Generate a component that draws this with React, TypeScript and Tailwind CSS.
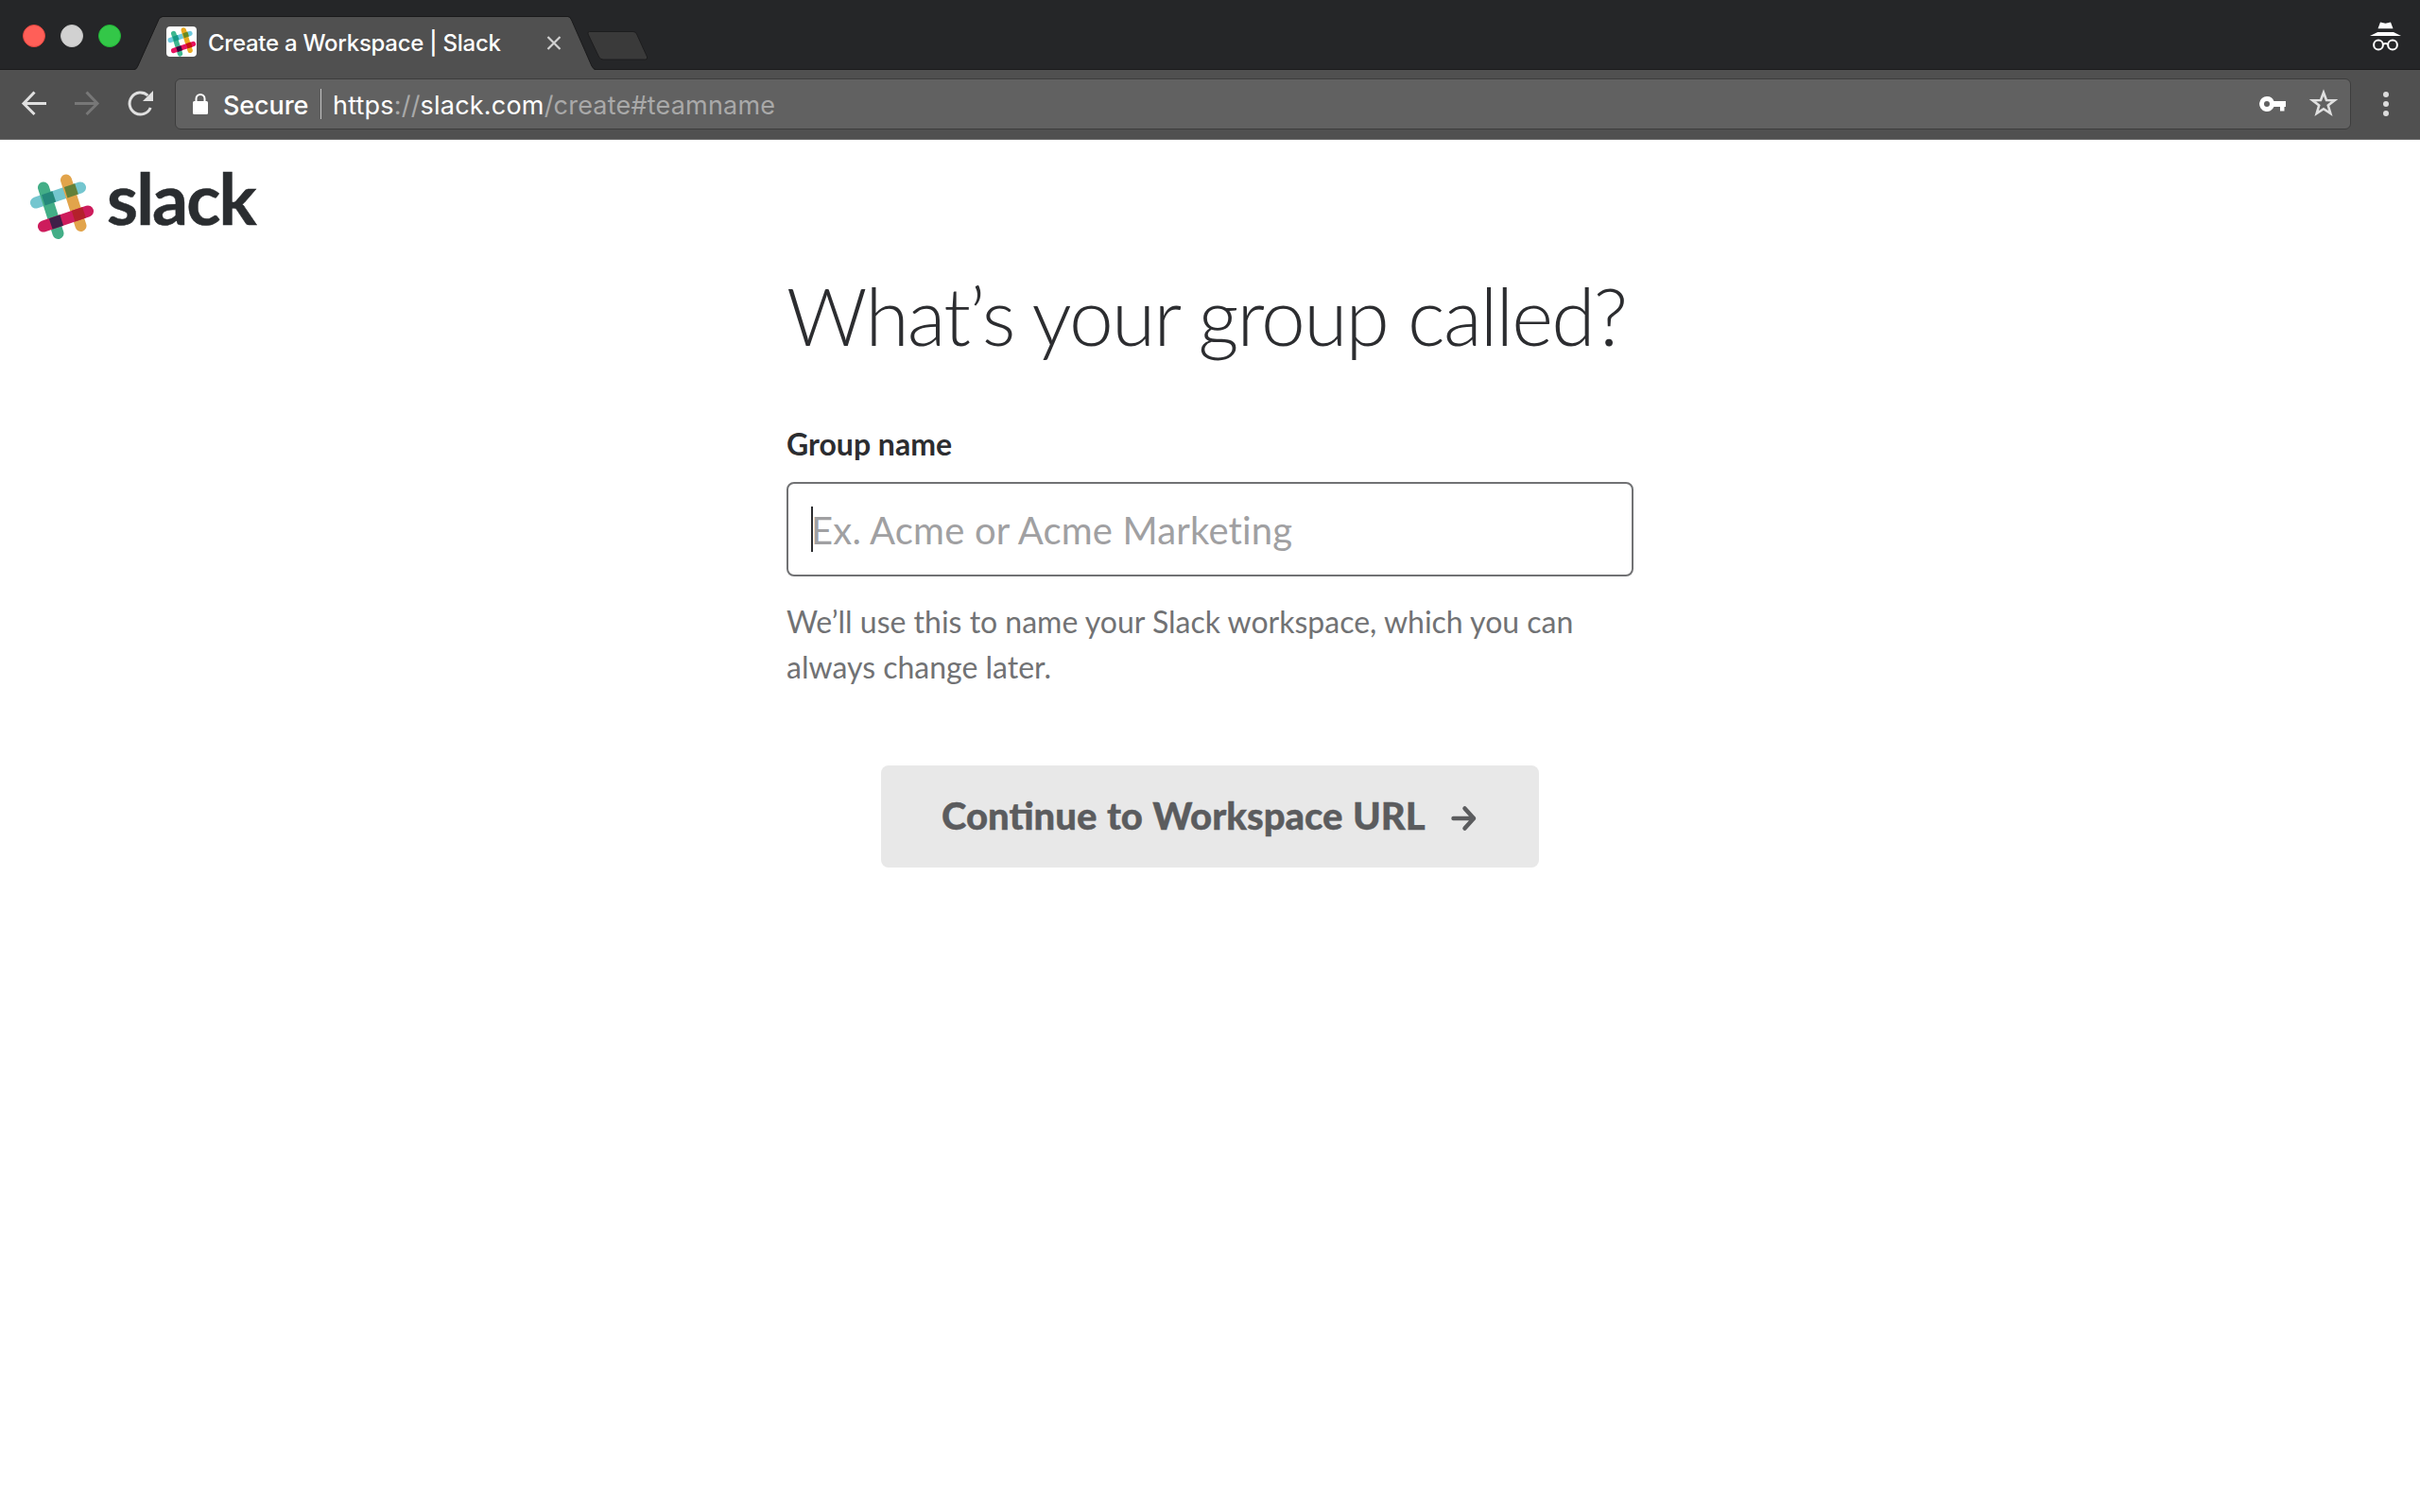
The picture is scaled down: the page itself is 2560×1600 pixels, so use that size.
import React from "react";

const ui = "font-['Inter',sans-serif]";

function SlackHash({ className, muted }: { className: string; muted?: boolean }) {
  const c = muted
    ? { blue: "#74c6cf", green: "#43ae87", gold: "#e2a44b", red: "#cd1c5c", bg: "#25887b", gg: "#63803a", gr: "#3f1f48", rr: "#b4212b" }
    : { blue: "#6fcbdf", green: "#3eb891", gold: "#ecaa1f", red: "#e6125f", bg: "#169a85", gg: "#6a8a1f", gr: "#34083a", rr: "#c8120f" };
  return (
    <svg className={className} viewBox="0 0 68 70">
      <g fill="none" strokeWidth="12" strokeLinecap="round">
        <path stroke={c.blue} d="M6 30.5 L53 14.5" />
        <path stroke={c.gold} d="M38 6.5 L53.5 55" />
        <path stroke={c.green} d="M14 14.5 L29.5 63" />
        <path stroke={c.red} d="M14 55.5 L61 39.5" />
      </g>
      <g>
        <path fill={c.bg} d="M12 22.2 L23.4 18.3 L27.2 29.6 L15.6 33.6 Z" />
        <path fill={c.gg} d="M35.8 14 L47.2 10.2 L50.8 21.6 L39.4 25.4 Z" />
        <path fill={c.gr} d="M19.8 47.2 L31.4 43.2 L35 54.8 L23.6 58.6 Z" />
        <path fill={c.rr} d="M43.8 39 L55.2 35.2 L58.8 46.6 L47.4 50.4 Z" />
      </g>
    </svg>
  );
}

function TabStrip() {
  return (
    <div className="flex h-[74px] items-start bg-[#252628] shadow-[inset_0_-1px_0_#1b1b1c]">
      <div className="flex gap-4 pl-6 pt-[26px]">
        <span className="size-6 rounded-full border border-[#e2463f] bg-[#ff5f58]" />
        <span className="size-6 rounded-full border border-[#c3c3c3] bg-[#d1d1d1]" />
        <span className="size-6 rounded-full border border-[#22b637] bg-[#33c748]" />
      </div>
      <div className="relative ml-[14px] mt-[16px] h-[58px] w-[488px]">
        <svg className="absolute inset-0 h-[58px] w-[488px]" viewBox="0 0 488 58">
          <path d="M0 58 Q2 58 3.500 55 L26 4.500 Q27.500 2 30 2 H459 Q461 2 462.500 5 L484 54 Q486 58 488 58 Z" fill="#505050" />
          <path d="M0 57.500 Q2 57.500 3.500 54.500 L26 4.500 Q27.500 1.500 30 1.500 H459 Q461 1.500 462.500 5 L484 54 Q486 57.500 488 57.500" fill="none" stroke="#1a1a1b" />
        </svg>
        <div className="relative flex h-[58px] items-center pl-[34px]">
          <div className="-mt-[2px] flex size-8 items-center justify-center rounded bg-white">
            <SlackHash className="h-[31px] w-[31px]" />
          </div>
          <span className={`${ui} mt-px ml-3 w-[320px] whitespace-nowrap text-[24px] font-medium tracking-[-0.26px] text-white`}>
            Create a Workspace | Slack
          </span>
          <svg className="ml-[38px] mt-[2px] size-4" viewBox="0 0 16 16" stroke="#d2d2d2" strokeWidth="2.200">
            <path d="M1.500 1 L14.500 14 M14.500 1 L1.500 14" />
          </svg>
        </div>
      </div>
      <svg className="-ml-[12px] mt-[32px] h-[34px] w-[70px]" viewBox="0 0 70 34">
        <path d="M5.500 1.500 H52 Q54.500 1.500 55.500 4 L66.500 28 Q67.500 31 64.500 31 H20 Q17 31 15.500 28 L4 4 Q3.500 1.500 5.500 1.500 Z" fill="#3a3a3a" stroke="#1d1d1e" />
      </svg>
      <svg className="ml-auto mr-5 mt-[23px] h-[31px] w-[33px]" viewBox="0 0 33 31" fill="#fff">
        <path d="M11 0.500 L16.500 1.800 L22 0.500 L24.500 7.300 H8.500 Z M8.200 11 H25 L33 15 H0 Z" />
        <g fill="none" stroke="#fff" strokeWidth="2">
          <circle cx="9" cy="24.500" r="4.900" />
          <circle cx="24" cy="24.500" r="4.900" />
          <path d="M14 24 Q16.500 22 19 24" />
        </g>
      </svg>
    </div>
  );
}

function Toolbar() {
  return (
    <div className="flex h-[74px] items-start border-b border-[#6b6b6b] bg-[#505050] pt-[9px]">
      <svg className="ml-[22px] mt-[12px] size-7" viewBox="0 0 28 28" fill="none" stroke="#e0e0e0" strokeWidth="3">
        <path d="M27 14.500 H3 M14.500 2.500 L3 14.500 L14.500 26" />
      </svg>
      <svg className="ml-7 mt-[12px] size-7" viewBox="0 0 28 28" fill="none" stroke="#777" strokeWidth="3">
        <path d="M1 14.500 H25 M13.500 2.500 L25 14.500 L13.500 26" />
      </svg>
      <svg className="ml-7 mt-[12px] size-[30px]" viewBox="0 0 30 30" fill="none" stroke="#e0e0e0" strokeWidth="3">
        <path d="M22.300 6 A11.500 11.500 0 1 0 25.200 19" />
        <path d="M28 1 V12 H17 Z" fill="#e0e0e0" stroke="none" />
      </svg>
      <div className={`${ui} ml-[21px] flex h-[54px] w-[2302px] items-center rounded-md border border-[#3d3d3d] bg-[#616161] text-[27px] text-white`}>
        <svg className="ml-[18px] h-[22px] w-4" viewBox="0 0 16 22">
          <rect y="8" width="16" height="14" rx="1.500" fill="#fff" />
          <path d="M3.500 9 V5.500 A4.500 4.500 0 0 1 12.500 5.500 V9" fill="none" stroke="#fff" strokeWidth="2" />
        </svg>
        <span className="ml-4 mt-1 w-[103px] whitespace-nowrap font-medium tracking-[-0.1px]">Secure</span>
        <span className="h-8 w-px bg-[#c4c4c4]" />
        <span className="ml-3 mt-1 whitespace-nowrap tracking-[0.2px]">
          https<span className="text-[#a9a9a9]">://</span>slack.com<span className="text-[#a9a9a9]">/create#teamname</span>
        </span>
        <svg className="-mt-px ml-auto h-4 w-7" viewBox="0 0 28 16" fill="#fff">
          <path fillRule="evenodd" d="M8 0 A8 8 0 1 0 15.500 11 H22 V15.500 H26.500 V11 H28 V5 H15.500 A8 8 0 0 0 8 0 Z M8 5 A3 3 0 1 1 8 11 A3 3 0 1 1 8 5 Z" />
        </svg>
        <svg className="-mt-[2px] ml-[25px] mr-[13px] size-[30px]" viewBox="0 0 30 30" fill="none" stroke="#e0e0e0" strokeWidth="2.600">
          <path d="M15 4 L18 12 L26.500 12.300 L19.800 17.500 L22.300 26 L15 21.200 L7.700 26 L10.200 17.500 L3.500 12.300 L12 12 Z" />
        </svg>
      </div>
      <div className="ml-[34px] mt-[14px] flex flex-col gap-1">
        <span className="size-1.5 rounded-full bg-[#dcdcdc]" />
        <span className="size-1.5 rounded-full bg-[#dcdcdc]" />
        <span className="size-1.5 rounded-full bg-[#dcdcdc]" />
      </div>
    </div>
  );
}

export default function App() {
  return (
    <div className="h-[1600px] w-[2560px] overflow-hidden bg-white font-['Lato',sans-serif] text-[#2c2d30]">
      <TabStrip />
      <Toolbar />
      <header className="flex h-[112px] items-start pl-8 pt-9">
        <SlackHash className="h-[70px] w-[68px]" muted />
        <span className="ml-[13px] -mt-[20px] text-[75px] font-bold leading-[90px] tracking-[-1.8px] text-[#2a2d30] [-webkit-text-stroke:0.5px_#2a2d30]">slack</span>
      </header>
      <main className="mx-auto flex w-[896px] flex-col">
        <h1 className="mt-[24px] whitespace-nowrap text-[84px] font-light leading-[100px] tracking-[-1.8px]">What’s your group called?</h1>
        <label className="mt-[66px] text-[32px] font-bold leading-[40px]">Group name</label>
        <div className="mt-[20px] flex h-[100px] items-center rounded-lg border-2 border-[#717274] pl-6">
          <span className="h-12 w-0.5 bg-[#2c2d30]" />
          <span className="-ml-0.5 mt-[2px] text-[40px] leading-[50px] tracking-[0.18px] text-[#a0a0a2]">Ex. Acme or Acme Marketing</span>
        </div>
        <p className="mt-[24px] text-[32px] leading-[48px] text-[#717274]">
          We’ll use this to name your Slack workspace, which you can always change later.
        </p>
        <button className="mt-[80px] flex h-[108px] w-[696px] items-center self-center rounded-lg bg-[#e8e8e8] pl-16 text-[40px] font-black text-[#5b5c5e]">
          <span className="-mt-[2px] w-[539px] whitespace-nowrap text-left [-webkit-text-stroke:0.4px_#5b5c5e] [word-spacing:1px]">Continue to Workspace URL</span>
          <svg className="mt-1 h-7 w-7" viewBox="0 0 28 28" fill="none" stroke="#5b5c5e" strokeWidth="4.500" strokeLinecap="round" strokeLinejoin="round">
            <path d="M2.500 14 H24 M14.500 3.500 L24 14 L14.500 24.500" />
          </svg>
        </button>
      </main>
    </div>
  );
}
